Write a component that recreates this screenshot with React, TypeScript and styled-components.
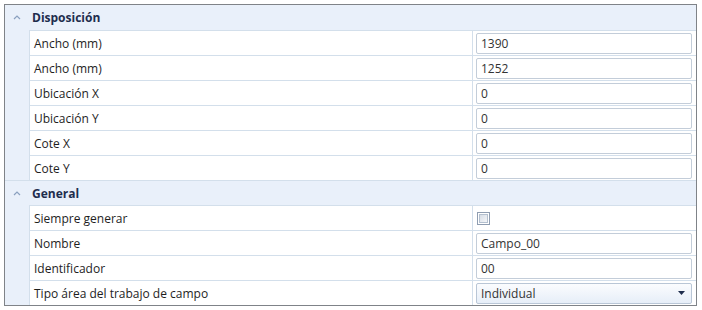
import React from "react";
import styled, { createGlobalStyle } from "styled-components";

const GlobalStyle = createGlobalStyle`
  html, body {
    margin: 0;
    padding: 0;
    background: #ffffff;
    font-family: "Segoe UI", "Open Sans", "Noto Sans", sans-serif;
  }
`;

type Field =
  | { kind: "text"; label: string; value: string }
  | { kind: "check"; label: string; checked: boolean }
  | { kind: "select"; label: string; value: string };

type Section = { title: string; fields: Field[] };

const sections: Section[] = [
  {
    title: "Disposición",
    fields: [
      { kind: "text", label: "Ancho (mm)", value: "1390" },
      { kind: "text", label: "Ancho (mm)", value: "1252" },
      { kind: "text", label: "Ubicación X", value: "0" },
      { kind: "text", label: "Ubicación Y", value: "0" },
      { kind: "text", label: "Cote X", value: "0" },
      { kind: "text", label: "Cote Y", value: "0" }
    ]
  },
  {
    title: "General",
    fields: [
      { kind: "check", label: "Siempre generar", checked: false },
      { kind: "text", label: "Nombre", value: "Campo_00" },
      { kind: "text", label: "Identificador", value: "00" },
      { kind: "select", label: "Tipo área del trabajo de campo", value: "Individual" }
    ]
  }
];

const Grid = styled.div`
  box-sizing: border-box;
  margin: 4px 0 0 4px;
  width: 693px;
  border: 1px solid #7f8388;
  background: #ffffff;
`;

const SectionHeader = styled.div<{ $first?: boolean }>`
  height: 25px;
  display: flex;
  align-items: center;
  background: #e9f0fa;
  box-sizing: border-box;
  border-top: ${(p) => (p.$first ? "none" : "1px solid #d3dfeb")};
`;

const Chevron = styled.span`
  width: 24px;
  display: flex;
  justify-content: center;
  color: #8aa0bf;
  & > svg {
    width: 8px;
    height: 5px;
  }
`;

const SectionTitle = styled.span`
  margin-left: 3px;
  font-size: 12px;
  font-weight: 700;
  color: #1e2d4d;
`;

const SectionBody = styled.div`
  display: flex;
`;

const Gutter = styled.div`
  width: 24px;
  flex: none;
  background: #e9f0fa;
`;

const Rows = styled.div`
  flex: 1;
  display: flex;
  flex-direction: column;
  border-left: 1px solid #d3dfeb;
`;

const Row = styled.div`
  display: grid;
  grid-template-columns: 443px 1fr;
  height: 25px;
  box-sizing: border-box;
  border-top: 1px solid #d3dfeb;
`;

const Label = styled.div`
  display: flex;
  align-items: center;
  padding-left: 4px;
  font-size: 12px;
  color: #1e1e1e;
  border-right: 1px solid #d3dfeb;
`;

const ValueCell = styled.div`
  display: flex;
  align-items: center;
  padding: 0 4px 0 3px;
`;

const TextBox = styled.div`
  flex: 1;
  height: 21px;
  box-sizing: border-box;
  border: 1px solid #c3cdd9;
  border-radius: 2px;
  display: flex;
  align-items: center;
  padding-left: 4px;
  font-size: 12px;
  color: #333333;
  background: #ffffff;
`;

const CheckBox = styled.div`
  width: 13px;
  height: 13px;
  box-sizing: border-box;
  border: 1px solid #8f9db1;
  padding: 1px;
  margin-left: 1px;
  background: #ffffff;
  &::after {
    content: "";
    display: block;
    width: 100%;
    height: 100%;
    box-sizing: border-box;
    border: 1px solid #b4c0cf;
    background: linear-gradient(135deg, #d7dde6 0%, #f4f6f9 100%);
  }
`;

const Select = styled(TextBox)`
  justify-content: space-between;
  padding-right: 6px;
  border-color: #b9c6d6;
  background: linear-gradient(180deg, #fbfcfe 0%, #e6eef8 100%);
  & > svg {
    width: 7px;
    height: 4px;
  }
`;

const FieldValue = ({ field }: { field: Field }) => {
  if (field.kind === "check") return <CheckBox />;
  if (field.kind === "select")
    return (
      <Select>
        <span>{field.value}</span>
        <svg viewBox="0 0 7 4">
          <path d="M0 0 H7 L3.5 4 Z" fill="#1e2d4d" />
        </svg>
      </Select>
    );
  return <TextBox>{field.value}</TextBox>;
};

const SectionBlock = ({ section, first }: { section: Section; first: boolean }) => (
  <>
    <SectionHeader $first={first}>
      <Chevron>
        <svg viewBox="0 0 8 5">
          <path d="M1 4 L4 1 L7 4" fill="none" stroke="currentColor" strokeWidth="1.2" />
        </svg>
      </Chevron>
      <SectionTitle>{section.title}</SectionTitle>
    </SectionHeader>
    <SectionBody>
      <Gutter />
      <Rows>
        {section.fields.map((f, i) => (
          <Row key={i}>
            <Label>{f.label}</Label>
            <ValueCell>
              <FieldValue field={f} />
            </ValueCell>
          </Row>
        ))}
      </Rows>
    </SectionBody>
  </>
);

export default function App(): JSX.Element {
  return (
    <>
      <GlobalStyle />
      <Grid>
        {sections.map((s, i) => (
          <SectionBlock key={s.title} section={s} first={i === 0} />
        ))}
      </Grid>
    </>
  );
}
